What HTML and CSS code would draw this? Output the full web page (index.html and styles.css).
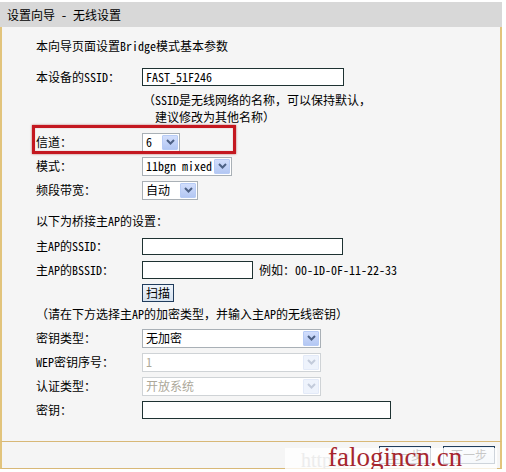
FILE: index.html
```html
<!DOCTYPE html>
<html lang="zh-CN">
<head>
<meta charset="utf-8">
<title>设置向导 - 无线设置</title>
<link rel="stylesheet" href="styles.css">
</head>
<body>
<div class="page">
  <div class="hd">设置向导 - 无线设置</div>
  <div class="panel">
    <div class="row intro">本向导页面设置Bridge模式基本参数</div>
    <div class="row fld r-ssid"><span class="lbl">本设备的SSID：</span><span class="inp w-ssid">FAST_51F246</span></div>
    <div class="row note n1">（SSID是无线网络的名称，可以保持默认，</div>
    <div class="row note n2">建议修改为其他名称）</div>
    <div class="row fld r-ch"><span class="lbl">信道：</span><span class="sel w-ch"><span class="val">6</span><span class="arr"><svg width="9" height="6" viewBox="0 0 9 6"><polyline points="1,1 4.5,4.5 8,1" /></svg></span></span></div>
    <div class="row fld"><span class="lbl">模式：</span><span class="sel w-mode"><span class="val">11bgn mixed</span><span class="arr"><svg width="9" height="6" viewBox="0 0 9 6"><polyline points="1,1 4.5,4.5 8,1" /></svg></span></span></div>
    <div class="row fld"><span class="lbl">频段带宽：</span><span class="sel w-bw"><span class="val">自动</span><span class="arr"><svg width="9" height="6" viewBox="0 0 9 6"><polyline points="1,1 4.5,4.5 8,1" /></svg></span></span></div>
    <div class="row sub r-head">以下为桥接主AP的设置：</div>
    <div class="row fld r-ap"><span class="lbl">主AP的SSID：</span><span class="inp w-apssid"></span></div>
    <div class="row fld"><span class="lbl">主AP的BSSID：</span><span class="inp w-bssid"></span><span class="eg">例如：00-1D-0F-11-22-33</span></div>
    <div class="row fld r-scan"><span class="lbl"></span><span class="btn scan">扫描</span></div>
    <div class="row sub r-enc">（请在下方选择主AP的加密类型，并输入主AP的无线密钥）</div>
    <div class="row fld r-kt"><span class="lbl">密钥类型：</span><span class="sel w-key"><span class="val">无加密</span><span class="arr"><svg width="9" height="6" viewBox="0 0 9 6"><polyline points="1,1 4.5,4.5 8,1" /></svg></span></span></div>
    <div class="row fld"><span class="lbl">WEP密钥序号：</span><span class="sel w-key dis"><span class="val">1</span><span class="arr"><svg width="9" height="6" viewBox="0 0 9 6"><polyline points="1,1 4.5,4.5 8,1" /></svg></span></span></div>
    <div class="row fld"><span class="lbl">认证类型：</span><span class="sel w-key dis"><span class="val">开放系统</span><span class="arr"><svg width="9" height="6" viewBox="0 0 9 6"><polyline points="1,1 4.5,4.5 8,1" /></svg></span></span></div>
    <div class="row fld"><span class="lbl">密钥：</span><span class="inp w-pass"></span></div>
  </div>
  <div class="foot">
    <span class="btn nav">上一步</span>
    <span class="btn nav">下一步</span>
  </div>
  <div class="redbox"></div>
  <div class="mark"><span class="http">http://</span><span class="wm">falogincn.cn</span></div>
</div>
</body>
</html>
```
FILE: styles.css
```css
* { box-sizing: border-box; }
html, body { margin: 0; background: #fff; }
body {
  font: 12px/16px "Noto Sans Mono CJK SC", "Noto Sans CJK SC", sans-serif;
  color: #000;
}
.page { position: relative; width: 502px; padding-top: 2px; }
.hd {
  height: 25px;
  background: #d8d8d8;
  padding-left: 7px;
  display: flex;
  align-items: center;
}
.panel {
  background: #f5f5f5;
  border-left: 2px solid #e2c47c;
  border-right: 2px solid #e2c47c;
  border-bottom: 1px solid #d8b877;
  padding: 7px 0 19px 34px;
  display: flex;
  flex-direction: column;
}
.row { display: flex; align-items: center; white-space: nowrap; }
.intro { height: 24px; }
.fld { height: 24px; }
.r-ssid { margin-top: 7px; }
.note { height: 16px; padding-left: 107px; }
.n1 { margin-top: 3px; }
.n2 { margin-top: 1px; padding-left: 119px; }
.r-ch { margin-top: 5px; }
.sub { height: 16px; }
.r-head { margin-top: 11px; }
.r-ap { margin-top: 5px; }
.r-scan { height: 20px; margin-top: 1px; }
.r-enc { margin-top: 3px; }
.r-kt { margin-top: 4px; }
.lbl { width: 106px; flex: none; }
.inp {
  height: 18px;
  background: #fff;
  border: 1px solid #1e3232;
  padding-left: 3px;
  display: flex;
  align-items: center;
}
.w-ssid { width: 202px; }
.w-apssid { width: 201px; height: 17px; }
.w-bssid { width: 111px; }
.w-pass { width: 249px; }
.eg { margin-left: 6px; }
.sel {
  height: 19px;
  background: #fff;
  border: 1px solid #a9b0b6;
  display: flex;
  align-items: stretch;
}
.sel .val { flex: 1; padding-left: 3px; display: flex; align-items: center; }
.sel .arr {
  width: 16px;
  margin: 1px;
  border: 1px solid #b7cbf5;
  border-radius: 1px;
  background: linear-gradient(#d2defc, #b3c7f3);
  display: flex;
  align-items: center;
  justify-content: center;
}
.sel .arr polyline { fill: none; stroke: #4d6185; stroke-width: 2; }
.w-ch { width: 38px; }
.w-mode { width: 90px; }
.w-bw { width: 56px; }
.w-key { width: 179px; }
.sel.dis { border-color: #cfd3d6; }
.sel.dis .val { color: #aca899; }
.sel.dis .arr { background: #eef3fc; border-color: #e3eaf8; }
.sel.dis .arr polyline { stroke: #c3cbdb; }
.btn {
  display: flex;
  align-items: center;
  justify-content: center;
  height: 18px;
  border: 1px solid #203c5c;
  background: linear-gradient(#eef3fa, #d6e2ef);
}
.scan { width: 32px; }
.foot {
  height: 27px;
  background: #f5f5f5;
  border-left: 2px solid #e2c47c;
  border-right: 2px solid #e2c47c;
  border-bottom: 1px solid #d8b877;
  display: flex;
  justify-content: flex-end;
  gap: 12px;
  padding: 4px 5px 0 0;
}
.nav { width: 52px; }
.redbox {
  position: absolute;
  left: 32px;
  top: 125px;
  width: 204px;
  height: 29px;
  border: 3px solid #c41820;
  box-shadow: 0 0 2px rgba(150, 0, 0, 0.6), inset 0 0 1px rgba(150, 0, 0, 0.5);
}
.mark {
  position: absolute;
  left: 285px;
  top: 448px;
  width: 212px;
  height: 24px;
  background: rgba(255, 255, 255, 0.78);
}
.http {
  position: absolute;
  left: 16px;
  top: -2px;
  font: 20px/28px "Liberation Serif", serif;
  color: #ececec;
}
.wm {
  position: absolute;
  left: 43px;
  top: -8px;
  font: 27px/34px "Liberation Serif", serif;
  color: #a6262e;
}
```
